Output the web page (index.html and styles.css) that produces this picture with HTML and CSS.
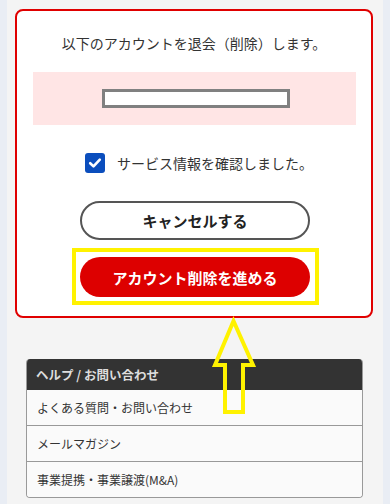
FILE: index.html
```html
<!DOCTYPE html>
<html lang="ja">
<head>
<meta charset="utf-8">
<title>退会</title>
<link rel="stylesheet" href="styles.css">
</head>
<body>
<div class="page">
  <div class="card">
    <p class="lead">以下のアカウントを退会（削除）します。</p>
    <div class="account-box"><div class="account-field"></div></div>
    <label class="confirm">
      <span class="checkbox">
        <svg width="14" height="14" viewBox="0 0 14 14"><path d="M2.2 7.2 L5.5 10.4 L11.8 3.6" fill="none" stroke="#fff" stroke-width="2.6" stroke-linecap="round" stroke-linejoin="round"/></svg>
      </span>
      <span class="confirm-text">サービス情報を確認しました。</span>
    </label>
    <div class="actions">
      <button class="btn btn-cancel">キャンセルする</button>
      <div class="highlight">
        <button class="btn btn-delete">アカウント削除を進める</button>
      </div>
    </div>
  </div>
  <div class="help">
    <div class="help-head">ヘルプ / お問い合わせ</div>
    <div class="help-row">よくある質問・お問い合わせ</div>
    <div class="help-row">メールマガジン</div>
    <div class="help-row">事業提携・事業譲渡(M&amp;A)</div>
  </div>
  <svg class="arrow" width="60" height="110" viewBox="0 0 60 110">
    <polygon points="26.5,6 8,50 18,50 18,97 36,97 36,50 46,50" fill="none" stroke="#fff200" stroke-width="4" stroke-linejoin="miter"/>
  </svg>
</div>
</body>
</html>
```

FILE: styles.css
```css
html, body {
  margin: 0;
  padding: 0;
}
body {
  background: #e9edf4;
  font-family: "Noto Sans CJK JP", "Noto Sans", sans-serif;
  color: #333;
}
.page {
  position: relative;
  margin: 0 7px;
  width: 376px;
  min-height: 504px;
  background: #f4f4f4;
  padding: 9px 0 0 8px;
  box-sizing: border-box;
}
.card {
  width: 358px;
  box-sizing: border-box;
  background: #fff;
  border: 2px solid #e00000;
  border-radius: 8px;
  padding: 22px 0 11px 0;
}
.lead {
  margin: 0;
  font-size: 14px;
  line-height: 20px;
  text-align: center;
  color: #333;
}
.account-box {
  margin: 19px 15px 0 16px;
  height: 53px;
  background: #ffe5e5;
  display: flex;
  align-items: center;
  justify-content: center;
}
.account-field {
  width: 188px;
  height: 19px;
  box-sizing: border-box;
  border: 3px solid #808080;
  background: #fff;
  margin-left: 3px;
}
.confirm {
  margin-top: 28px;
  display: flex;
  align-items: center;
  padding-left: 68px;
  height: 20px;
}
.checkbox {
  width: 20px;
  height: 20px;
  border-radius: 3px;
  background: #0b4ebd;
  display: flex;
  align-items: center;
  justify-content: center;
}
.confirm-text {
  margin-left: 12px;
  font-size: 14px;
  line-height: 20px;
  color: #333;
}
.actions {
  margin-top: 28px;
  padding-left: 55px;
  display: flex;
  flex-direction: column;
  align-items: flex-start;
}
.btn {
  font-family: "Noto Sans CJK JP", "Noto Sans", sans-serif;
  font-weight: bold;
  font-size: 15px;
  width: 230px;
  border-radius: 20px;
  padding: 0;
  cursor: pointer;
}
.btn-cancel {
  margin-left: 8px;
  height: 39px;
  border: 2px solid #555;
  background: #fff;
  color: #222;
}
.highlight {
  margin-top: 8px;
  border: 4px solid #fff200;
  padding: 5px 5px 4px 4px;
}
.btn-delete {
  height: 40px;
  border: none;
  background: #dd0000;
  color: #fff;
}
.help {
  margin: 41px 0 0 11px;
  width: 337px;
  border-radius: 4px;
  overflow: hidden;
  border: 1px solid #999;
  border-top: none;
  box-sizing: border-box;
}
.help-head {
  height: 31px;
  background: #333;
  color: #ddd;
  font-weight: bold;
  font-size: 12.5px;
  line-height: 31px;
  padding-left: 10px;
  margin: 0 -1px;
}
.help-row {
  height: 35px;
  line-height: 35px;
  background: #fafafa;
  font-size: 12px;
  color: #333;
  padding-left: 10px;
  border-top: 1px solid #999;
}
.help-head + .help-row {
  border-top: none;
}
.arrow {
  position: absolute;
  left: 200px;
  top: 315px;
}
```
